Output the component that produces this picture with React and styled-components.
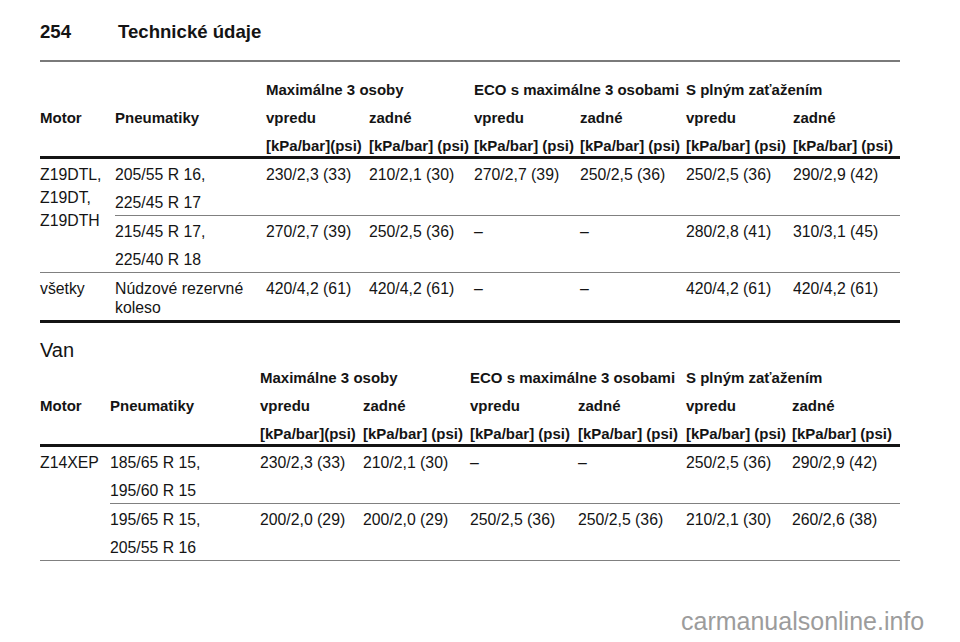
import React from "react";
import styled, { createGlobalStyle } from "styled-components";

const Global = createGlobalStyle`
  html, body { margin: 0; padding: 0; background: #fff; }
  body { font-family: "Liberation Sans", Arial, sans-serif; color: #141414; }
  #root { width: 960px; height: 642px; position: relative; overflow: hidden; }
`;

const Page = styled.div`
  position: relative;
  width: 960px;
  height: 642px;
  padding: 20px 60px 0 40px;
  box-sizing: border-box;
`;

const TitleBar = styled.div`
  display: flex;
  align-items: center;
  height: 24px;
  font-size: 18.6px;
  font-weight: bold;
  line-height: 24px;
`;

const PageNo = styled.span`
  width: 78px;
`;

const TopRule = styled.div`
  margin-top: 16px;
  height: 2px;
  background: #7a7a7a;
`;

const Section = styled.h2`
  margin: 15px 0 0;
  font-size: 20px;
  font-weight: normal;
  line-height: 24px;
  color: #141414;
`;

const Head = styled.div`
  display: grid;
  grid-template-columns: ${(p) => p.$cols};
  grid-template-rows: 20px 20px 20px;
  row-gap: 8px;
  padding-top: ${(p) => p.$top}px;
  border-bottom: 3px solid #141414;
  font-size: 15px;
  font-weight: bold;
  line-height: 20px;
  white-space: nowrap;
`;

const HeadCell = styled.div`
  grid-row: ${(p) => p.$row};
  grid-column: ${(p) => p.$col};
`;

const Body = styled.div`
  display: grid;
  grid-template-columns: ${(p) => p.$cols};
  border-bottom: ${(p) => (p.$thick ? "3px solid #141414" : "none")};
  font-size: 15.8px;
  line-height: 19px;
`;

const Cell = styled.div`
  padding: 6px 0 3px;
  border-bottom: ${(p) => (p.$rule ? "1px solid #808080" : "none")};
  grid-row: ${(p) => (p.$span ? `span ${p.$span}` : "auto")};
  white-space: ${(p) => (p.$wrap ? "normal" : "nowrap")};
  padding-right: ${(p) => (p.$wrap ? "6px" : "0")};
`;

const MotorLine = styled.div`
  line-height: 23px;
  &:first-child { margin-top: -2px; }
`;

const Line = styled.div`
  & + & { margin-top: 9px; }
`;

const Watermark = styled.div`
  position: absolute;
  left: 681px;
  top: 606px;
  font-size: 25px;
  line-height: 30px;
  color: #9c9c9c;
  font-family: "Liberation Sans", Arial, sans-serif;
`;

const table1 = [
  {
    motor: ["Z19DTL,", "Z19DT,", "Z19DTH"],
    rows: [
      { tire: ["205/55 R 16,", "225/45 R 17"], vals: ["230/2,3 (33)", "210/2,1 (30)", "270/2,7 (39)", "250/2,5 (36)", "250/2,5 (36)", "290/2,9 (42)"] },
      { tire: ["215/45 R 17,", "225/40 R 18"], vals: ["270/2,7 (39)", "250/2,5 (36)", "–", "–", "280/2,8 (41)", "310/3,1 (45)"] },
    ],
  },
  {
    motor: ["všetky"],
    rows: [
      { tire: "Núdzové rezervné koleso", vals: ["420/4,2 (61)", "420/4,2 (61)", "–", "–", "420/4,2 (61)", "420/4,2 (61)"] },
    ],
  },
];

const table2 = [
  {
    motor: ["Z14XEP"],
    rows: [
      { tire: ["185/65 R 15,", "195/60 R 15"], vals: ["230/2,3 (33)", "210/2,1 (30)", "–", "–", "250/2,5 (36)", "290/2,9 (42)"] },
      { tire: ["195/65 R 15,", "205/55 R 16"], vals: ["200/2,0 (29)", "200/2,0 (29)", "250/2,5 (36)", "250/2,5 (36)", "210/2,1 (30)", "260/2,6 (38)"] },
    ],
  },
];

const cols1 = "75px 151px 103px 105px 106px 106px 107px 107px";
const cols2 = "70px 150px 103px 107px 108px 108px 106px 108px";

function Header({ cols, top, firstUnit }) {
  const groups = ["Maximálne 3 osoby", "ECO s maximálne 3 osobami", "S plným zaťažením"];
  return (
    <Head $cols={cols} $top={top}>
      {groups.map((g, i) => (
        <HeadCell key={g} $row={1} $col={`${3 + i * 2} / span 2`}>{g}</HeadCell>
      ))}
      <HeadCell $row={2} $col={1}>Motor</HeadCell>
      <HeadCell $row={2} $col={2}>Pneumatiky</HeadCell>
      {[0, 1, 2, 3, 4, 5].map((i) => (
        <HeadCell key={"s" + i} $row={2} $col={3 + i}>{i % 2 === 0 ? "vpredu" : "zadné"}</HeadCell>
      ))}
      {[0, 1, 2, 3, 4, 5].map((i) => (
        <HeadCell key={"u" + i} $row={3} $col={3 + i}>{i === 0 ? firstUnit : "[kPa/bar] (psi)"}</HeadCell>
      ))}
    </Head>
  );
}

function DataTable({ cols, top, groups, thickEnd }) {
  return (
    <>
      <Header cols={cols} top={top} firstUnit="[kPa/bar](psi)" />
      <Body $cols={cols} $thick={thickEnd}>
        {groups.map((g, gi) => {
          const lastGroup = gi === groups.length - 1;
          const endRule = !(lastGroup && thickEnd);
          return (
            <React.Fragment key={gi}>
              <Cell $span={g.rows.length} $rule={endRule}>
                {g.motor.map((m) => (
                  <MotorLine key={m}>{m}</MotorLine>
                ))}
              </Cell>
              {g.rows.map((r, ri) => {
                const rule = ri < g.rows.length - 1 ? true : endRule;
                return (
                  <React.Fragment key={ri}>
                    <Cell $rule={rule} $wrap={typeof r.tire === "string"}>
                      {typeof r.tire === "string"
                        ? r.tire
                        : r.tire.map((t) => <Line key={t}>{t}</Line>)}
                    </Cell>
                    {r.vals.map((v, vi) => (
                      <Cell key={vi} $rule={rule}>{v}</Cell>
                    ))}
                  </React.Fragment>
                );
              })}
            </React.Fragment>
          );
        })}
      </Body>
    </>
  );
}

export default function App() {
  return (
    <>
      <Global />
      <Page>
        <TitleBar>
          <PageNo>254</PageNo>
          <span>Technické údaje</span>
        </TitleBar>
        <TopRule />
        <DataTable cols={cols1} top={18} groups={table1} thickEnd />
        <Section>Van</Section>
        <DataTable cols={cols2} top={6} groups={table2} thickEnd={false} />
        <Watermark>carmanualsonline.info</Watermark>
      </Page>
    </>
  );
}
